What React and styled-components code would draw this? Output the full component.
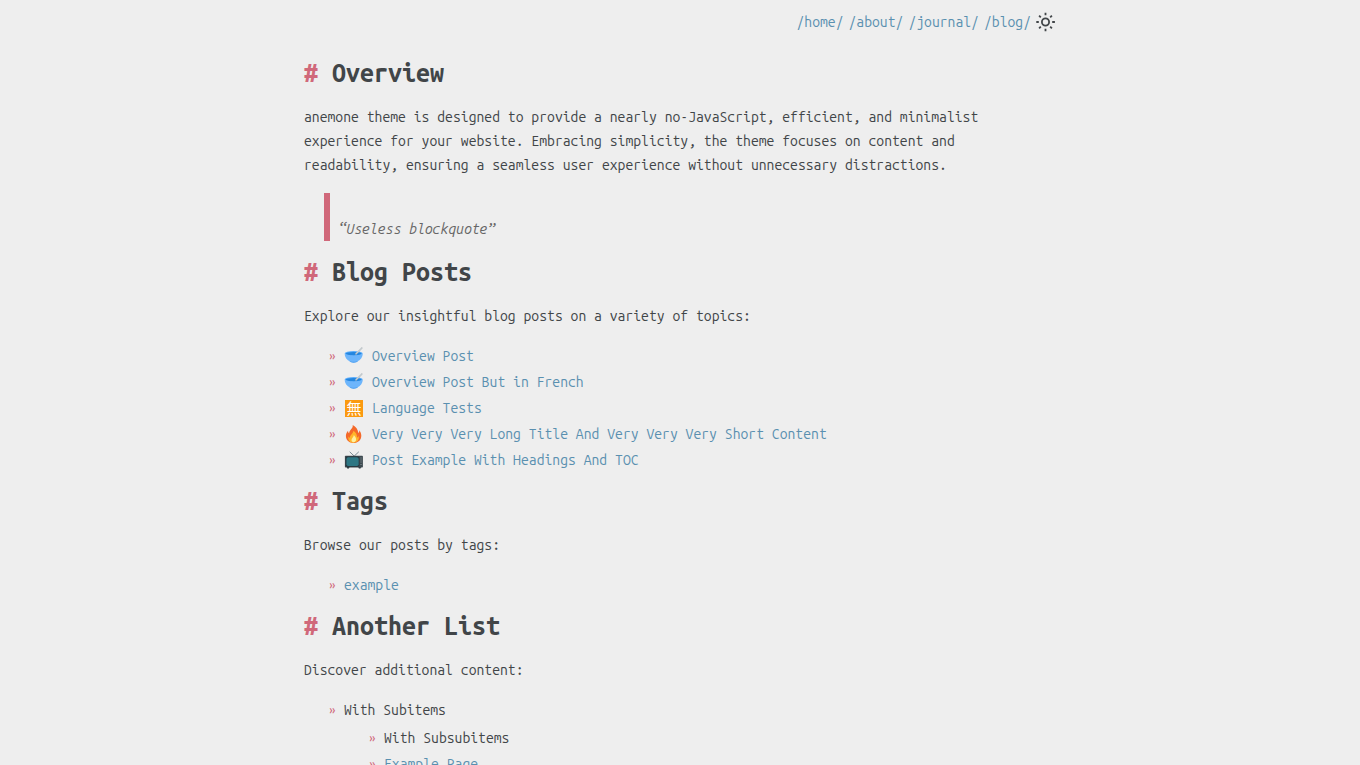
import React from "react";
import styled, { createGlobalStyle, css } from "styled-components";

const GlobalStyle = createGlobalStyle`
  :root {
    --bg: #eeeeee;
    --text: #414548;
    --link: #5a90b0;
    --accent: #d0687a;
    --mono: "Ubuntu Mono", "Noto Sans Mono CJK JP", "DejaVu Sans Mono", monospace;
  }
  body {
    margin: 0;
    background: var(--bg);
    color: var(--text);
    font: 14px/24px var(--mono);
  }
`;

const Page = styled.div`
  max-width: 752px;
  margin: 0 auto;
  padding: 10px 8px 32px;
`;

const Header = styled.header`
  display: flex;
  justify-content: flex-end;
  margin-bottom: 24px;
`;

const Nav = styled.nav`
  display: flex;
  align-items: center;
  gap: 5px;
`;

const Link = styled.a`
  color: var(--link);
  text-decoration: none;
  &:hover {
    text-decoration: underline;
  }
`;

const ThemeButton = styled.button`
  display: flex;
  padding: 0;
  border: 0;
  background: none;
  color: var(--text);
  cursor: pointer;
`;

const Heading = styled.h1`
  margin: 0 0 16px;
  font-size: 25px;
  line-height: 31px;
  font-weight: 700;
  &::before {
    content: "# ";
    color: var(--accent);
  }
`;

const Paragraph = styled.p`
  margin: 0 0 16px;
`;

const Quote = styled.blockquote`
  margin: 0 20px 16px;
  padding: 24px 8px 0;
  border-left: 6px solid var(--accent);
  color: #666666;
  font-style: italic;
`;

const List = styled.ul`
  display: grid;
  gap: 2px;
  margin: ${(p) => (p.$nested ? "4px 0 0" : "0 0 14px")};
  padding-left: 40px;
  list-style: "» ";
`;

const Item = styled.li`
  &::marker {
    color: var(--accent);
  }
`;

const iconBox = css`
  display: inline-block;
  width: 20px;
  height: 20px;
  margin-right: 8px;
  vertical-align: -5px;
`;

const EmojiSvg = styled.svg`
  ${iconBox}
`;

const KanjiTile = styled.span`
  ${iconBox}
  width: 18px;
  height: 17px;
  margin: 0 9px 0 1px;
  overflow: hidden;
  vertical-align: -4px;
  background: #fb9a10;
  color: #ffffff;
  font: 400 15px/16px "Noto Sans CJK JP", sans-serif;
  text-align: center;
`;

const Sun = () => (
  <svg width="20" height="20" viewBox="0 0 20 20" fill="none" stroke="currentColor" strokeWidth="1.8" aria-hidden="true">
    <circle cx="9.5" cy="10" r="3.6" />
    <path d="M9.500 .7v2.500M9.500 16.800v2.500M.3 10h2.500M16.200 10h2.700M3.100 3.600l1.700 1.700M14.200 14.700l1.700 1.700M3.100 16.400l1.700-1.700M14.200 5.300l1.700-1.700" />
  </svg>
);

const Bowl = () => (
  <EmojiSvg viewBox="0 0 20 20" aria-hidden="true">
    <ellipse cx="9.700" cy="7.600" rx="9" ry="2.600" fill="#5eaefb" />
    <ellipse cx="9.700" cy="7.700" rx="7.900" ry="1.800" fill="#2486df" />
    <path d="M.7 7.600c1.400 2.400 16.600 2.400 18 0 0 3.900-2.300 6.600-5.300 7.900-.9 1.400-6.500 1.400-7.400 0C3 14.200.7 11.500.7 7.600z" fill="#6db5fb" />
    <path d="M5.500 15c1.800.9 6.600.9 8.400 0l-.5.8c-1 1.100-6.400 1.100-7.400 0z" fill="#4f9fee" />
    <path d="M12 8l5.800-6" stroke="#aeb6bb" strokeWidth="1.600" strokeLinecap="round" />
    <path d="M12.200 7.500l5.300-5.500" stroke="#e0e4e7" strokeWidth=".8" strokeLinecap="round" />
  </EmojiSvg>
);

const Fire = () => (
  <EmojiSvg viewBox="0 0 20 20" aria-hidden="true">
    <path d="M8.700 1c.7 3.200-3.400 5-3.600 8.300-.8-.6-1.100-1.600-1-2.600-1.600 1.800-2.300 3.600-2.200 5.600.2 4 3.400 6.700 7.500 6.700 4.600 0 7.900-3 7.900-7.300 0-2.500-1.100-4-2-5.400.1 1.300-.2 2.100-1 2.800C14 5.400 12 2.700 8.700 1z" fill="#f4692a" />
    <path d="M9.300 6.700c.5 2.200-3.400 4.100-3.500 7.200-.8-.4-1.100-1-1.200-1.700-1.100 3.800 1.300 6.500 4.800 6.500 3.700 0 6.200-2.900 5.200-6.700-.4.9-.9 1.400-1.600 1.700.3-3.100-1.400-5.600-3.700-7z" fill="#ffb52b" />
    <path d="M9.800 11c.2 2-2.300 2.900-2.300 5.100 0 1.300.8 2.100 2 2.100 1.600 0 2.700-1.200 2.600-2.900-.1-1.700-1.100-3.100-2.300-4.300z" fill="#fff0a0" />
  </EmojiSvg>
);

const Television = () => (
  <EmojiSvg viewBox="0 0 20 20" aria-hidden="true">
    <path d="M5.700 1.800l4.500 4.300L14.800 1.800" fill="none" stroke="#7b8b92" strokeWidth="1" />
    <path d="M2.800 17h2.700l-.6 1.600H3.200zM14.300 17H17l-.5 1.600h-1.600z" fill="#263238" />
    <rect x=".9" y="5.800" width="18" height="11.800" rx=".8" fill="#3d494f" />
    <rect x="1.700" y="6.500" width="13.600" height="10.200" rx="1.400" fill="#25343c" />
    <rect x="2.400" y="7.200" width="12.300" height="8.800" rx="1.800" fill="#2d7683" />
    <path d="M16.300 8h1.500M16.300 10h1.500M16.300 12h1.500M16.300 14.500h1.500" stroke="#8b999f" strokeWidth=".7" />
  </EmojiSvg>
);

const Kanji = () => <KanjiTile>無</KanjiTile>;

const sections = ["home", "about", "journal", "blog"];

const posts = [
  { Icon: Bowl, title: "Overview Post" },
  { Icon: Bowl, title: "Overview Post But in French" },
  { Icon: Kanji, title: "Language Tests" },
  { Icon: Fire, title: "Very Very Very Long Title And Very Very Very Short Content" },
  { Icon: Television, title: "Post Example With Headings And TOC" },
];

export default function App() {
  return (
    <>
      <GlobalStyle />
      <Page>
        <Header>
          <Nav>
            {sections.map((name) => (
              <Link key={name} href={`#${name}`}>{`/${name}/`}</Link>
            ))}
            <ThemeButton type="button" aria-label="Toggle theme">
              <Sun />
            </ThemeButton>
          </Nav>
        </Header>
        <main>
          <Heading>Overview</Heading>
          <Paragraph>
            anemone theme is designed to provide a nearly no-JavaScript, efficient, and minimalist
            experience for your website. Embracing simplicity, the theme focuses on content and
            readability, ensuring a seamless user experience without unnecessary distractions.
          </Paragraph>
          <Quote>“Useless blockquote”</Quote>

          <Heading>Blog Posts</Heading>
          <Paragraph>Explore our insightful blog posts on a variety of topics:</Paragraph>
          <List>
            {posts.map(({ Icon, title }) => (
              <Item key={title}>
                <Icon />
                <Link href="#post">{title}</Link>
              </Item>
            ))}
          </List>

          <Heading>Tags</Heading>
          <Paragraph>Browse our posts by tags:</Paragraph>
          <List>
            <Item>
              <Link href="#example">example</Link>
            </Item>
          </List>

          <Heading>Another List</Heading>
          <Paragraph>Discover additional content:</Paragraph>
          <List>
            <Item>
              With Subitems
              <List $nested>
                <Item>With Subsubitems</Item>
                <Item>
                  <Link href="#page">Example Page</Link>
                </Item>
              </List>
            </Item>
          </List>
        </main>
      </Page>
    </>
  );
}
